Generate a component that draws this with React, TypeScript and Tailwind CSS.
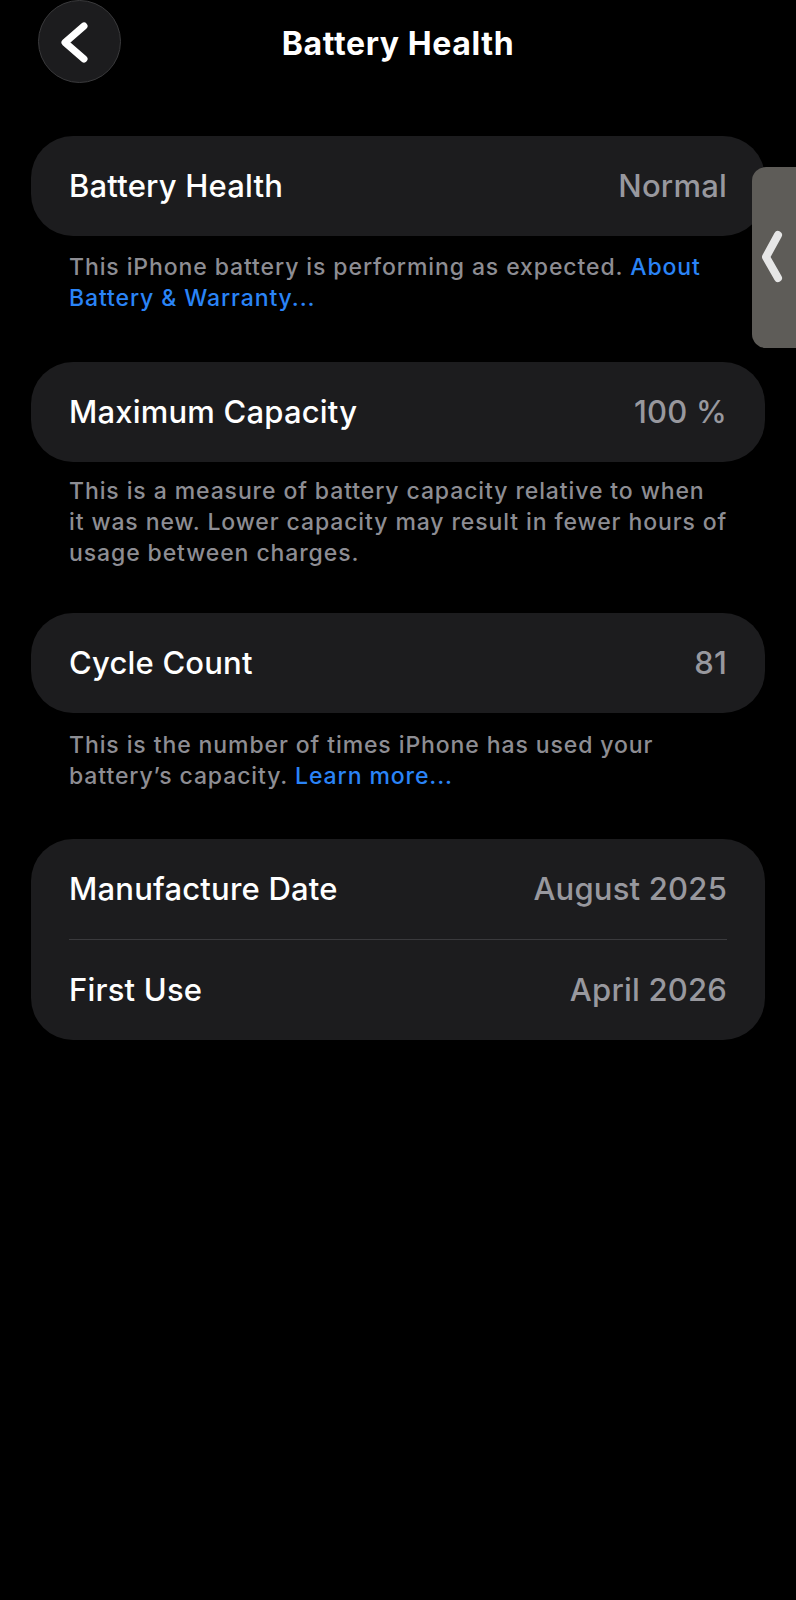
import React from "react";

const font = { fontFamily: "Inter, 'Noto Sans', sans-serif" };

function Row({ label, value }: { label: string; value: string }) {
  return (
    <div className="flex h-[100px] items-center justify-between px-[38px]">
      <span className="text-[31px] font-medium text-white tracking-[0.2px]">{label}</span>
      <span className="text-[31px] font-medium text-[#98989e] tracking-[0.2px]">{value}</span>
    </div>
  );
}

function Footer({ children, className = "" }: { children: React.ReactNode; className?: string }) {
  return (
    <p className={`pl-[69px] pr-[20px] text-[23px] leading-[31px] font-medium text-[#8d8d93] tracking-[0.9px] ${className}`}>{children}</p>
  );
}

export default function App() {
  return (
    <div className="relative min-h-[1600px] w-[796px] overflow-hidden bg-black" style={font}>
      {/* Header */}
      <div className="relative flex h-[136px] items-start justify-center">
        <div className="absolute left-[38px] top-0 flex h-[83px] w-[83px] items-center justify-center rounded-full border border-[#3a3a3c] bg-[#1c1c1e]">
          <svg width="83" height="83" viewBox="0 0 83 83" className="absolute left-[-1px] top-[-1px]">
            <polyline
              points="46,26 27,42.5 46,59"
              fill="none"
              stroke="#ffffff"
              strokeWidth="7"
              strokeLinecap="round"
              strokeLinejoin="round"
            />
          </svg>
        </div>
        <h1 className="mt-[24px] text-[32px] leading-[40px] font-bold text-white tracking-[0.6px]">Battery Health</h1>
      </div>

      {/* Section 1 */}
      <div className="mx-[31px] rounded-[42px] bg-[#1c1c1e]">
        <Row label="Battery Health" value="Normal" />
      </div>
      <Footer className="mt-[16px]">
        This iPhone battery is performing as expected.{" "}
        <span className="text-[#2a84f7]">About</span>
        <br />
        <span className="text-[#2a84f7]">Battery &amp; Warranty...</span>
      </Footer>

      {/* Section 2 */}
      <div className="mx-[31px] mt-[48px] rounded-[42px] bg-[#1c1c1e]">
        <Row label="Maximum Capacity" value="100 %" />
      </div>
      <Footer className="mt-[14px]">
        This is a measure of battery capacity relative to when
        <br />
        it was new. Lower capacity may result in fewer hours of
        <br />
        usage between charges.
      </Footer>

      {/* Section 3 */}
      <div className="mx-[31px] mt-[44px] rounded-[42px] bg-[#1c1c1e]">
        <Row label="Cycle Count" value="81" />
      </div>
      <Footer className="mt-[17px]">
        This is the number of times iPhone has used your
        <br />
        battery’s capacity. <span className="text-[#2a84f7]">Learn more...</span>
      </Footer>

      {/* Section 4 */}
      <div className="mx-[31px] mt-[47px] rounded-[42px] bg-[#1c1c1e]">
        <Row label="Manufacture Date" value="August 2025" />
        <div className="mx-[38px] h-px bg-[#3a3a3d]" />
        <Row label="First Use" value="April 2026" />
      </div>

      {/* Side tab overlay */}
      <div className="absolute left-[752px] top-[167px] h-[181px] w-[60px] rounded-l-[14px] bg-[#5e5c58]">
        <svg width="44" height="181" viewBox="0 0 44 181" className="absolute left-0 top-0">
          <polyline
            points="26,68 14,90 26,111"
            fill="none"
            stroke="#e6e6e6"
            strokeWidth="8"
            strokeLinecap="round"
            strokeLinejoin="round"
          />
        </svg>
      </div>
    </div>
  );
}
